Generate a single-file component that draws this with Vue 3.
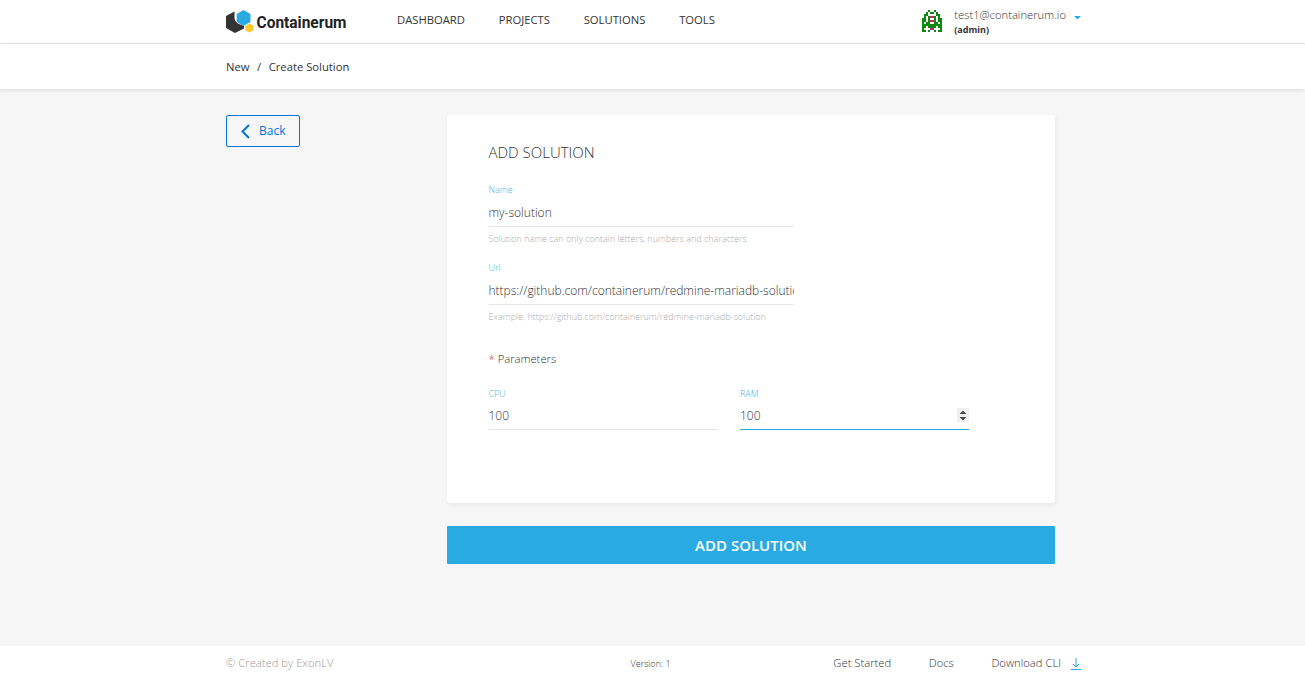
<script setup>
import { ref } from 'vue'

const nav = ['DASHBOARD', 'PROJECTS', 'SOLUTIONS', 'TOOLS']
const name = ref('my-solution')
const url = ref('https://github.com/containerum/redmine-mariadb-solution')
const cpu = ref('100')
const ram = ref('100')

// g = green, p = pink, . = empty
const avatar = [
  '...g..g...',
  '..g.gg.g..',
  '.gg....gg.',
  '.g.gppg.g.',
  'gg.g..g.gg',
  'gg.gppg.gg',
  'g.gg..gg.g',
  'gggggggggg',
  'gg.gggg.gg',
  'g...pp...g',
  'gg.g..g.gg',
]
const cells = avatar.flatMap((row, y) =>
  [...row].map((c, x) => ({ c, x, y })).filter((cell) => cell.c !== '.'),
)
</script>

<template>
  <div class="page">
    <header class="top">
      <div class="wrap">
        <svg class="logo" width="130" height="28" viewBox="0 0 130 28">
          <path d="M0 8 8.500 3.500 V10 Q9 14 13 16 L18 18 V20.500 L9 25 L0 20 Z" fill="#333" />
          <path d="M17.500 2 24.500 6 V14 L17.500 18 L10.700 14 V6 Z" fill="#29aae2" />
          <path d="M23.500 15.500 27.500 17.700 V22.300 L23.500 24.500 L19.300 22.300 V17.700 Z" fill="#ffc82e" />
          <text x="30.500" y="19.800" textLength="90" lengthAdjust="spacingAndGlyphs">Containerum</text>
        </svg>
        <nav>
          <a v-for="n in nav" :key="n">{{ n }}</a>
        </nav>
        <div class="user">
          <svg class="avatar" width="20" height="22" viewBox="0 0 10 11" shape-rendering="crispEdges">
            <rect v-for="c in cells" :key="c.x + '-' + c.y" :x="c.x" :y="c.y" width="1" height="1" :fill="c.c === 'g' ? '#0a8a0a' : '#c8286e'" />
          </svg>
          <div class="who">
            <span class="mail">test1@containerum.io</span>
            <b>(admin)</b>
          </div>
          <svg class="caret" width="7" height="4" viewBox="0 0 7 4"><path d="M0 0H7L3.500 3.500Z" fill="#29aae2" /></svg>
        </div>
      </div>
    </header>
    <div class="crumbs">
      <div class="wrap"><span>New</span><i>/</i><span>Create Solution</span></div>
    </div>
    <main class="wrap">
      <aside>
        <button class="back">
          <svg width="9" height="15" viewBox="0 0 9 15"><path d="M8 1 1.500 7.500 8 14" fill="none" stroke="#0275d8" stroke-width="2" /></svg>
          <span>Back</span>
        </button>
      </aside>
      <form @submit.prevent>
        <section class="card">
          <h1>ADD SOLUTION</h1>
          <div class="field">
            <label>Name</label>
            <input v-model="name" />
            <small>Solution name can only contain letters, numbers and characters</small>
          </div>
          <div class="field">
            <label>Url</label>
            <input v-model="url" />
            <small>Example: https://github.com/containerum/redmine-mariadb-solution</small>
          </div>
          <h2><em>*</em> Parameters</h2>
          <div class="params">
            <div class="field num">
              <label>CPU</label>
              <input v-model="cpu" />
            </div>
            <div class="field num">
              <label>RAM</label>
              <div class="line">
                <input v-model="ram" />
                <svg width="12" height="14" viewBox="0 0 12 14" shape-rendering="crispEdges">
                  <rect width="12" height="14" fill="#efefef" />
                  <path d="M5 3h2v1h1v1h1v1H3V5h1V4h1zM3 9h6v1H8v1H7v1H5v-1H4v-1H3z" fill="#4d4d4d" />
                </svg>
              </div>
            </div>
          </div>
        </section>
        <button class="submit">ADD SOLUTION</button>
      </form>
    </main>
    <footer>
      <div class="wrap">
        <span class="made">© Created by ExonLV</span>
        <span class="version">Version: 1</span>
        <div class="links">
          <a>Get Started</a><a>Docs</a><a>Download CLI</a>
          <svg width="10" height="12" viewBox="0 0 10 12"><path d="M5 0V9M2 6 5 9 8 6M0 11.500H10" fill="none" stroke="#29aae2" /></svg>
        </div>
      </div>
    </footer>
  </div>
</template>

<style>
body { margin: 0; overflow: hidden; }
</style>

<style scoped>
* { box-sizing: border-box; }
.page {
  height: 678px;
  display: flex;
  flex-direction: column;
  background: #f6f6f6;
  font-family: "Open Sans", "Noto Sans", sans-serif;
  font-weight: 400;
  color: #333;
}
.wrap { width: 855px; margin-left: 226px; display: flex; }
.top { height: 44px; background: #fff; border-bottom: 1px solid #e6e6e6; }
.top .wrap { height: 43px; }
.logo { margin-top: 8px; flex: none; overflow: visible; }
.logo text { font: 700 17px Roboto, sans-serif; fill: #222; }
nav { display: flex; gap: 33.750px; margin-left: 41px; font-size: 11.25px; line-height: 40px; }
.user { margin-left: auto; display: flex; }
.avatar { margin-top: 10px; }
.who { margin: 7px 8px 0 12px; display: flex; flex-direction: column; line-height: 15px; }
.mail { font-size: 11.25px; font-weight: 300; }
.who b { font-size: 9px; font-weight: 700; }
.caret { margin-top: 16px; }
.crumbs {
  height: 45px;
  background: #fff;
  box-shadow: 0 1px 4px rgba(0, 0, 0, 0.12);
  font-size: 11.25px;
  line-height: 46px;
}
.crumbs i { font-style: normal; margin: 0 7.500px; }
main { flex: 1; padding-top: 26px; }
aside { width: 221px; }
button { font-family: inherit; padding: 0; }
.back {
  width: 74px;
  height: 32px;
  display: flex;
  align-items: center;
  gap: 9px;
  padding-left: 14px;
  border: 1px solid #0275d8;
  border-radius: 2px;
  background: transparent;
  color: #0275d8;
  font-size: 12px;
}
.back span { padding-bottom: 2px; }
form { width: 608px; flex: none; }
.card {
  height: 388px;
  padding: 27px 42px 0 41.500px;
  background: #fff;
  border-radius: 3px;
  box-shadow: 1px 2px 4px rgba(0, 0, 0, 0.06);
}
h1 { margin: 0 0 17px; font-size: 15px; line-height: 20px; font-weight: 300; }
.field { width: 305px; height: 78px; display: flex; flex-direction: column; font-weight: 300; }
label { font-size: 9px; line-height: 22px; color: #29aae2; opacity: 0.9; }
input {
  width: 100%;
  height: 26px;
  padding: 0 0 2px;
  border: 0;
  border-bottom: 1px solid #e6e6e6;
  border-radius: 0;
  outline: 0;
  background: none;
  color: #333;
  font: 300 12px "Open Sans", "Noto Sans", sans-serif;
}
small { font-size: 9px; line-height: 24px; color: #aaa; white-space: nowrap; }
h2 { margin: 15px 0 15px; font-size: 11.25px; line-height: 18px; font-weight: 300; }
em { font-style: normal; color: #e02020; }
.params { display: flex; gap: 22.500px; }
.num { width: 229px; }
.num input { height: 25px; padding-bottom: 3px; }
.line { display: flex; border-bottom: 1px solid #29aae2; }
.num .line input { height: 24px; border: 0; }
.line svg { flex: none; margin-top: 3px; }
.submit {
  width: 608px;
  height: 38px;
  margin-top: 23px;
  display: block;
  border: 0;
  border-radius: 1px;
  background: #29aae2;
  color: #fff;
  font-size: 15px;
  font-weight: 600;
}
footer { height: 32px; background: #fff; font-size: 11.25px; font-weight: 300; line-height: 34px; }
.made { width: 404.500px; color: #999; }
.version { font-size: 9px; line-height: 35px; }
.links { margin-left: auto; display: flex; }
.links a + a { margin-left: 37.500px; }
.links svg { margin: 12px 0 0 10px; }
</style>
